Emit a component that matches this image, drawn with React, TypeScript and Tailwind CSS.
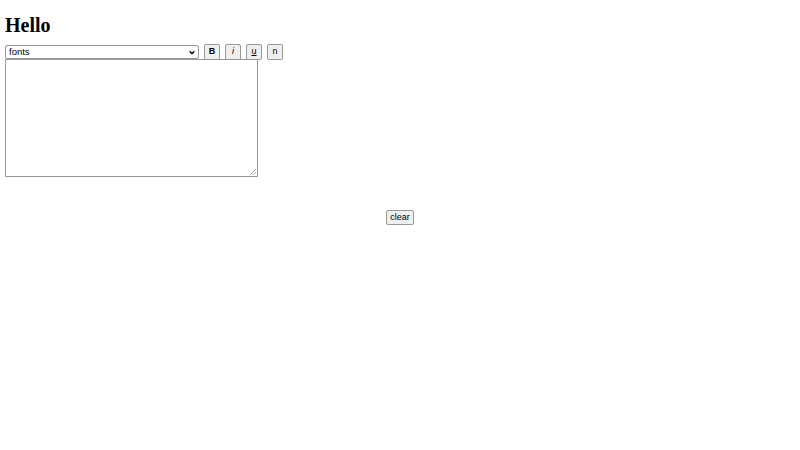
export default function App() {
  const btn =
    "h-[16px] w-[16px] flex items-center justify-center rounded-[2px] border border-[#999] bg-[#efefef] text-[9px] leading-none text-black";

  return (
    <div className="min-h-screen bg-white px-[5px] font-['Liberation_Sans',Arial,sans-serif] text-black">
      <h1 className="pt-[13px] font-['Liberation_Serif','Times_New_Roman',serif] text-[20px] font-bold leading-[24px]">
        Hello
      </h1>

      {/* Toolbar */}
      <div className="mt-[7px] flex h-[15px] items-center">
        <div className="relative flex h-[14px] w-[194px] items-center rounded-[2px] border border-[#999] bg-white">
          <span className="pl-[3px] text-[9.5px] leading-none">fonts</span>
          <svg
            className="absolute right-[3px] top-[4px]"
            width="6"
            height="5"
            viewBox="0 0 6 5"
            fill="none"
          >
            <path d="M0.7 1.2 L3 3.6 L5.3 1.2" stroke="#111" strokeWidth="1.5" />
          </svg>
        </div>
        <div className="ml-[5px] flex gap-[5px]">
          <button className={`${btn} font-bold`}>B</button>
          <button className={`${btn} italic`}>i</button>
          <button className={`${btn} underline`}>u</button>
          <button className={btn}>n</button>
        </div>
      </div>

      {/* Editor */}
      <div className="relative h-[118px] w-[253px] border border-[#999] bg-white">
        <svg
          className="absolute bottom-[1px] right-[1px]"
          width="6"
          height="6"
          viewBox="0 0 6 6"
        >
          <path d="M6 0 L0 6 M6 3 L3 6" stroke="#999" strokeWidth="0.8" />
        </svg>
      </div>

      <div className="mt-[33px] flex justify-center">
        <button className="h-[15px] w-[28px] rounded-[2px] border border-[#999] bg-[#efefef] text-[9px] leading-none text-black">
          clear
        </button>
      </div>
    </div>
  );
}
